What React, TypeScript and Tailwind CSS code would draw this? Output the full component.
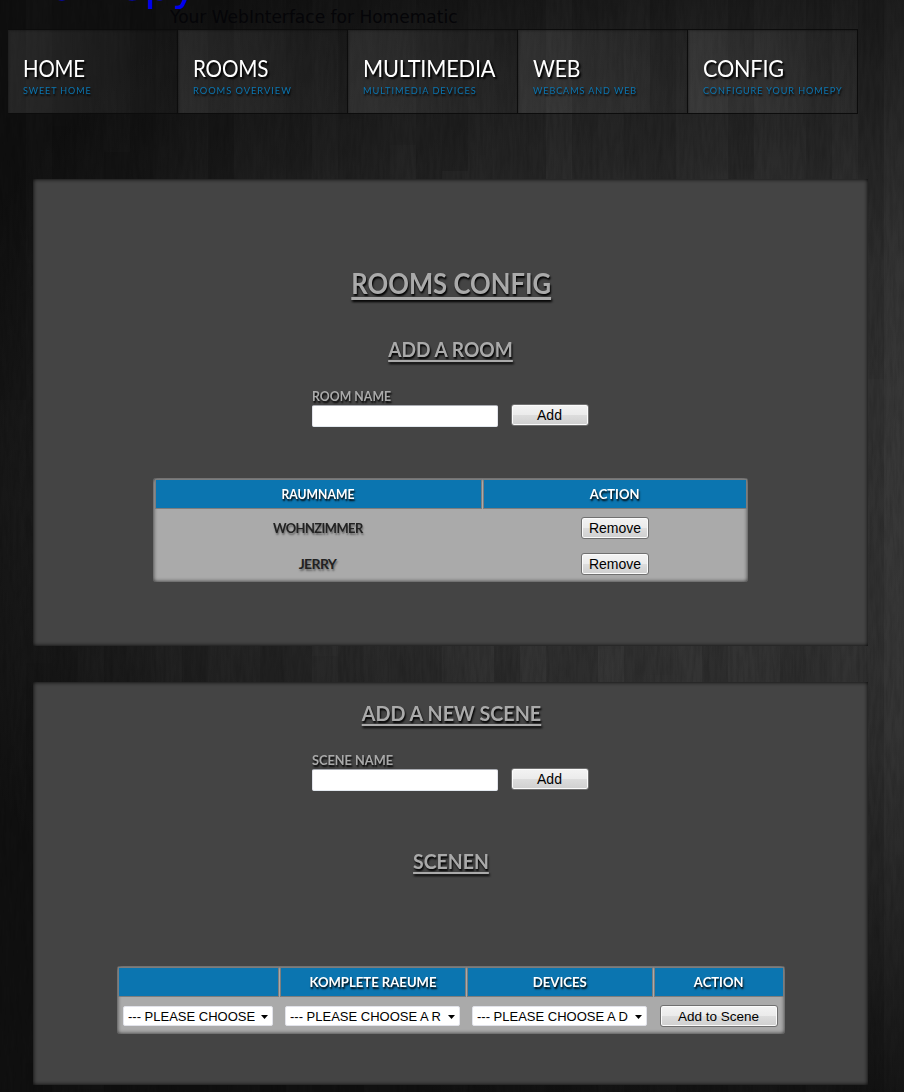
import type { ReactNode } from 'react';

const nav = [
  ['HOME', 'SWEET HOME', 'scale-x-[0.85]', 'scale-x-[0.9]'],
  ['ROOMS', 'ROOMS OVERVIEW', 'scale-x-[0.86]', 'scale-x-[0.935]'],
  ['MULTIMEDIA', 'MULTIMEDIA DEVICES', 'scale-x-[0.905]', 'scale-x-[0.925]'],
  ['WEB', 'WEBCAMS AND WEB', 'scale-x-[0.88]', 'scale-x-[0.905]'],
  ['CONFIG', 'CONFIGURE YOUR HOMEPY', 'scale-x-[0.9]', 'scale-x-[0.91]'],
];

const shades = [30, 8, 22, 0, 38, 14, 26, 4, 34, 18, 10, 40, 6, 28, 16, 36, 2, 24, 12, 32];

function Wood() {
  return (
    <svg className="absolute inset-0" width="904" height="1092" aria-hidden="true">
      <defs>
        <filter id="grain" x="0" y="0" width="100%" height="100%">
          <feTurbulence type="fractalNoise" baseFrequency="0.3 0.035" numOctaves="3" seed="4" />
          <feColorMatrix values="0 0 0 0 0  0 0 0 0 0  0 0 0 0 0  1.4 0 0 0 -0.5" />
        </filter>
        <radialGradient
          id="glow"
          gradientUnits="userSpaceOnUse"
          cx="0"
          cy="0"
          r="1"
          gradientTransform="translate(760 500) scale(860 640)"
        >
          <stop offset="0" stopColor="#3a3a3a" />
          <stop offset="0.4" stopColor="#333333" />
          <stop offset="0.7" stopColor="#232323" />
          <stop offset="0.9" stopColor="#171717" />
          <stop offset="1" stopColor="#121212" />
        </radialGradient>
      </defs>
      <rect width="904" height="1092" fill="url(#glow)" />
      {Array.from({ length: 34 }, (_, i) =>
        [0, 1, 2, 3].map((j) => (
          <rect
            key={`${i}-${j}`}
            x={i * 26}
            y={j * 400 - ((i * 137) % 300)}
            width="26"
            height="400"
            fill="#000"
            opacity={shades[(i * 3 + j * 7) % 20] / 240}
          />
        )),
      )}
      <rect width="904" height="1092" filter="url(#grain)" opacity="0.18" />
    </svg>
  );
}

function Heading({ children, className, fit }: { children: ReactNode; className: string; fit: string }) {
  return (
    <h2 className={`text-center font-bold text-[#aaa] ${className}`}>
      <span className={`inline-block underline [text-decoration-skip-ink:none] [text-shadow:1px_2px_2px_#000] ${fit}`}>
        {children}
      </span>
    </h2>
  );
}

function Btn({ children, className }: { children: ReactNode; className: string }) {
  return (
    <button
      className={`h-[22px] shrink-0 rounded-[3px] border border-[#707070] bg-[linear-gradient(#f3f3f3,#ebebeb_50%,#dddddd_50%,#cfcfcf)] font-['Liberation_Sans',sans-serif] leading-[20px] text-black shadow-[inset_0_0_0_1px_#fbfbfb] ${className}`}
    >
      {children}
    </button>
  );
}

function NameForm({ label, className }: { label: string; className: string }) {
  return (
    <div className="ml-[279px] flex">
      <div>
        <label
          className={`block h-[17px] w-max origin-left text-[14px] leading-[15px] font-bold text-[#aaa] [text-shadow:1px_2px_2px_#000] ${className}`}
        >
          {label}
        </label>
        <input className="block h-[22px] w-[186px] rounded-[2px] border border-[#abadb3] border-x-[#e2e3ea] border-b-[#e3e9ef] bg-white px-1 outline-none" />
      </div>
      <Btn className="mt-4 ml-[13px] w-[78px] pr-px text-[14px]">Add</Btn>
    </div>
  );
}

function Th({ children, className, fit = '' }: { children?: ReactNode; className: string; fit?: string }) {
  return (
    <div
      className={`h-[30px] border border-[#7d7d7d] bg-[#0b75b0] text-center text-[14px] leading-[28px] font-bold text-white [text-shadow:1px_2px_2px_#000] ${className}`}
    >
      <span className={`inline-block ${fit}`}>{children}</span>
    </div>
  );
}

function Select({ children, className }: { children: ReactNode; className: string }) {
  return (
    <div className={`flex h-[20px] items-center justify-between rounded-[2px] border border-[#e2e3ea] bg-white pr-1 pl-1 ${className}`}>
      <span className="overflow-hidden pt-px font-['Liberation_Sans',sans-serif] text-[13px] whitespace-pre text-black">{children}</span>
      <svg width="7" height="4" className="mt-px shrink-0">
        <path d="M0 0h7L3.5 4z" fill="#000" />
      </svg>
    </div>
  );
}

const panel = 'ml-[33px] w-[835px] bg-[#444] shadow-[inset_0_0_4px_#000]';
const table = 'rounded-[3px] bg-[#aaa] shadow-[inset_0_0_4px_#222]';
const rooms = [
  ['WOHNZIMMER', 'scale-x-[0.92]'],
  ['JERRY', 'scale-x-100'],
];

export default function App() {
  return (
    <div className="relative h-[1092px] w-[904px] overflow-hidden bg-[#191919] font-[Lato,sans-serif]">
      <Wood />
      <div className="relative">
        <header className="flex h-[29px] overflow-hidden font-['DejaVu_Sans',sans-serif]">
          <a className="-mt-[41px] ml-[16px] h-[60px] w-[154px] shrink-0 text-[43.5px] leading-[52px] text-[#0000ee]">Homepy</a>
          <p className="mt-[7px] text-[17.05px] leading-5 whitespace-nowrap text-[#050508]">Your WebInterface for Homematic</p>
        </header>

        <nav className="ml-2 flex h-[85px] w-[850px]">
          {nav.map(([title, sub, a, b]) => (
            <a
              key={title}
              className="block w-[170px] border-y border-r border-[#0c0c0c] bg-linear-to-r from-white/10 to-white/2 pt-[24px] pl-[15px] whitespace-nowrap shadow-[inset_1px_1px_2px_rgba(0,0,0,0.25)]"
            >
              <span className={`block w-max origin-left text-[24px] leading-[28px] tracking-[-0.2px] text-white [text-shadow:2px_2px_2px_#000] ${a}`}>
                {title}
              </span>
              <span className={`mt-px block w-max origin-left text-[10px] leading-[14px] tracking-[1px] text-[#0b75b0] [text-shadow:1px_2px_2px_#000] ${b}`}>
                {sub}
              </span>
            </a>
          ))}
        </nav>

        <section className={`mt-[65px] h-[467px] pt-[87px] ${panel}`}>
          <Heading className="h-[34px] pl-px text-[28px] leading-[34px]" fit="scale-x-[0.915] decoration-[3px] underline-offset-[3px]">
            ROOMS CONFIG
          </Heading>
          <Heading className="mt-[36px] h-[26px] text-[21px] leading-[26px]" fit="scale-x-[0.91] decoration-[2px] underline-offset-[3px]">
            ADD A ROOM
          </Heading>
          <div className="mt-[26px]">
            <NameForm label="ROOM NAME" className="scale-x-[0.88]" />
          </div>
          <div className={`mt-[51px] ml-[120px] h-[104px] w-[595px] pt-px pl-[2px] ${table}`}>
            <div className="mb-px flex gap-px">
              <Th className="w-[327px] pr-[2px]" fit="scale-x-[0.87]">RAUMNAME</Th>
              <Th className="w-[264px]" fit="scale-x-[0.93]">ACTION</Th>
            </div>
            {rooms.map(([name, fit]) => (
              <div key={name} className="flex h-[36px] items-center gap-px">
                <div className="w-[327px] pr-[2px] pb-0.5 text-center text-[14px] leading-[17px] font-bold tracking-[-0.6px] text-[#222] [text-shadow:1px_2px_2px_#666]">
                  <span className={`inline-block ${fit}`}>{name}</span>
                </div>
                <div className="flex w-[264px] justify-center">
                  <Btn className="w-[68px] text-[14px]">Remove</Btn>
                </div>
              </div>
            ))}
          </div>
        </section>

        <section className={`mt-[36px] h-[403px] pt-[18px] ${panel}`}>
          <Heading className="h-[26px] pl-px text-[21px] leading-[26px]" fit="scale-x-[0.94] decoration-[2px] underline-offset-[3px]">
            ADD A NEW SCENE
          </Heading>
          <div className="mt-[26px]">
            <NameForm label="SCENE NAME" className="scale-x-[0.91]" />
          </div>
          <Heading className="mt-[57px] h-[26px] text-[21px] leading-[26px]" fit="scale-x-[0.925] decoration-[2px] underline-offset-[3px]">
            SCENEN
          </Heading>
          <div className={`mt-[92px] ml-[84px] h-[68px] w-[668px] pt-px pl-px ${table}`}>
            <div className="mb-px flex gap-px">
              <Th className="w-[161px]" />
              <Th className="w-[186px]" fit="scale-x-[0.935]">KOMPLETE RAEUME</Th>
              <Th className="w-[186px]" fit="scale-x-[0.94]">DEVICES</Th>
              <Th className="w-[130px]" fit="scale-x-[0.93]">ACTION</Th>
            </div>
            <div className="flex h-[36px] items-center pl-[5px]">
              <Select className="w-[150px]">--- PLEASE CHOOSE</Select>
              <Select className="ml-3 w-[175px]">--- PLEASE CHOOSE A R</Select>
              <Select className="ml-3 w-[175px]">--- PLEASE CHOOSE A D</Select>
              <Btn className="ml-[13px] w-[118px] pt-px pr-px text-[13.5px]">Add to Scene</Btn>
            </div>
          </div>
        </section>
      </div>
    </div>
  );
}
